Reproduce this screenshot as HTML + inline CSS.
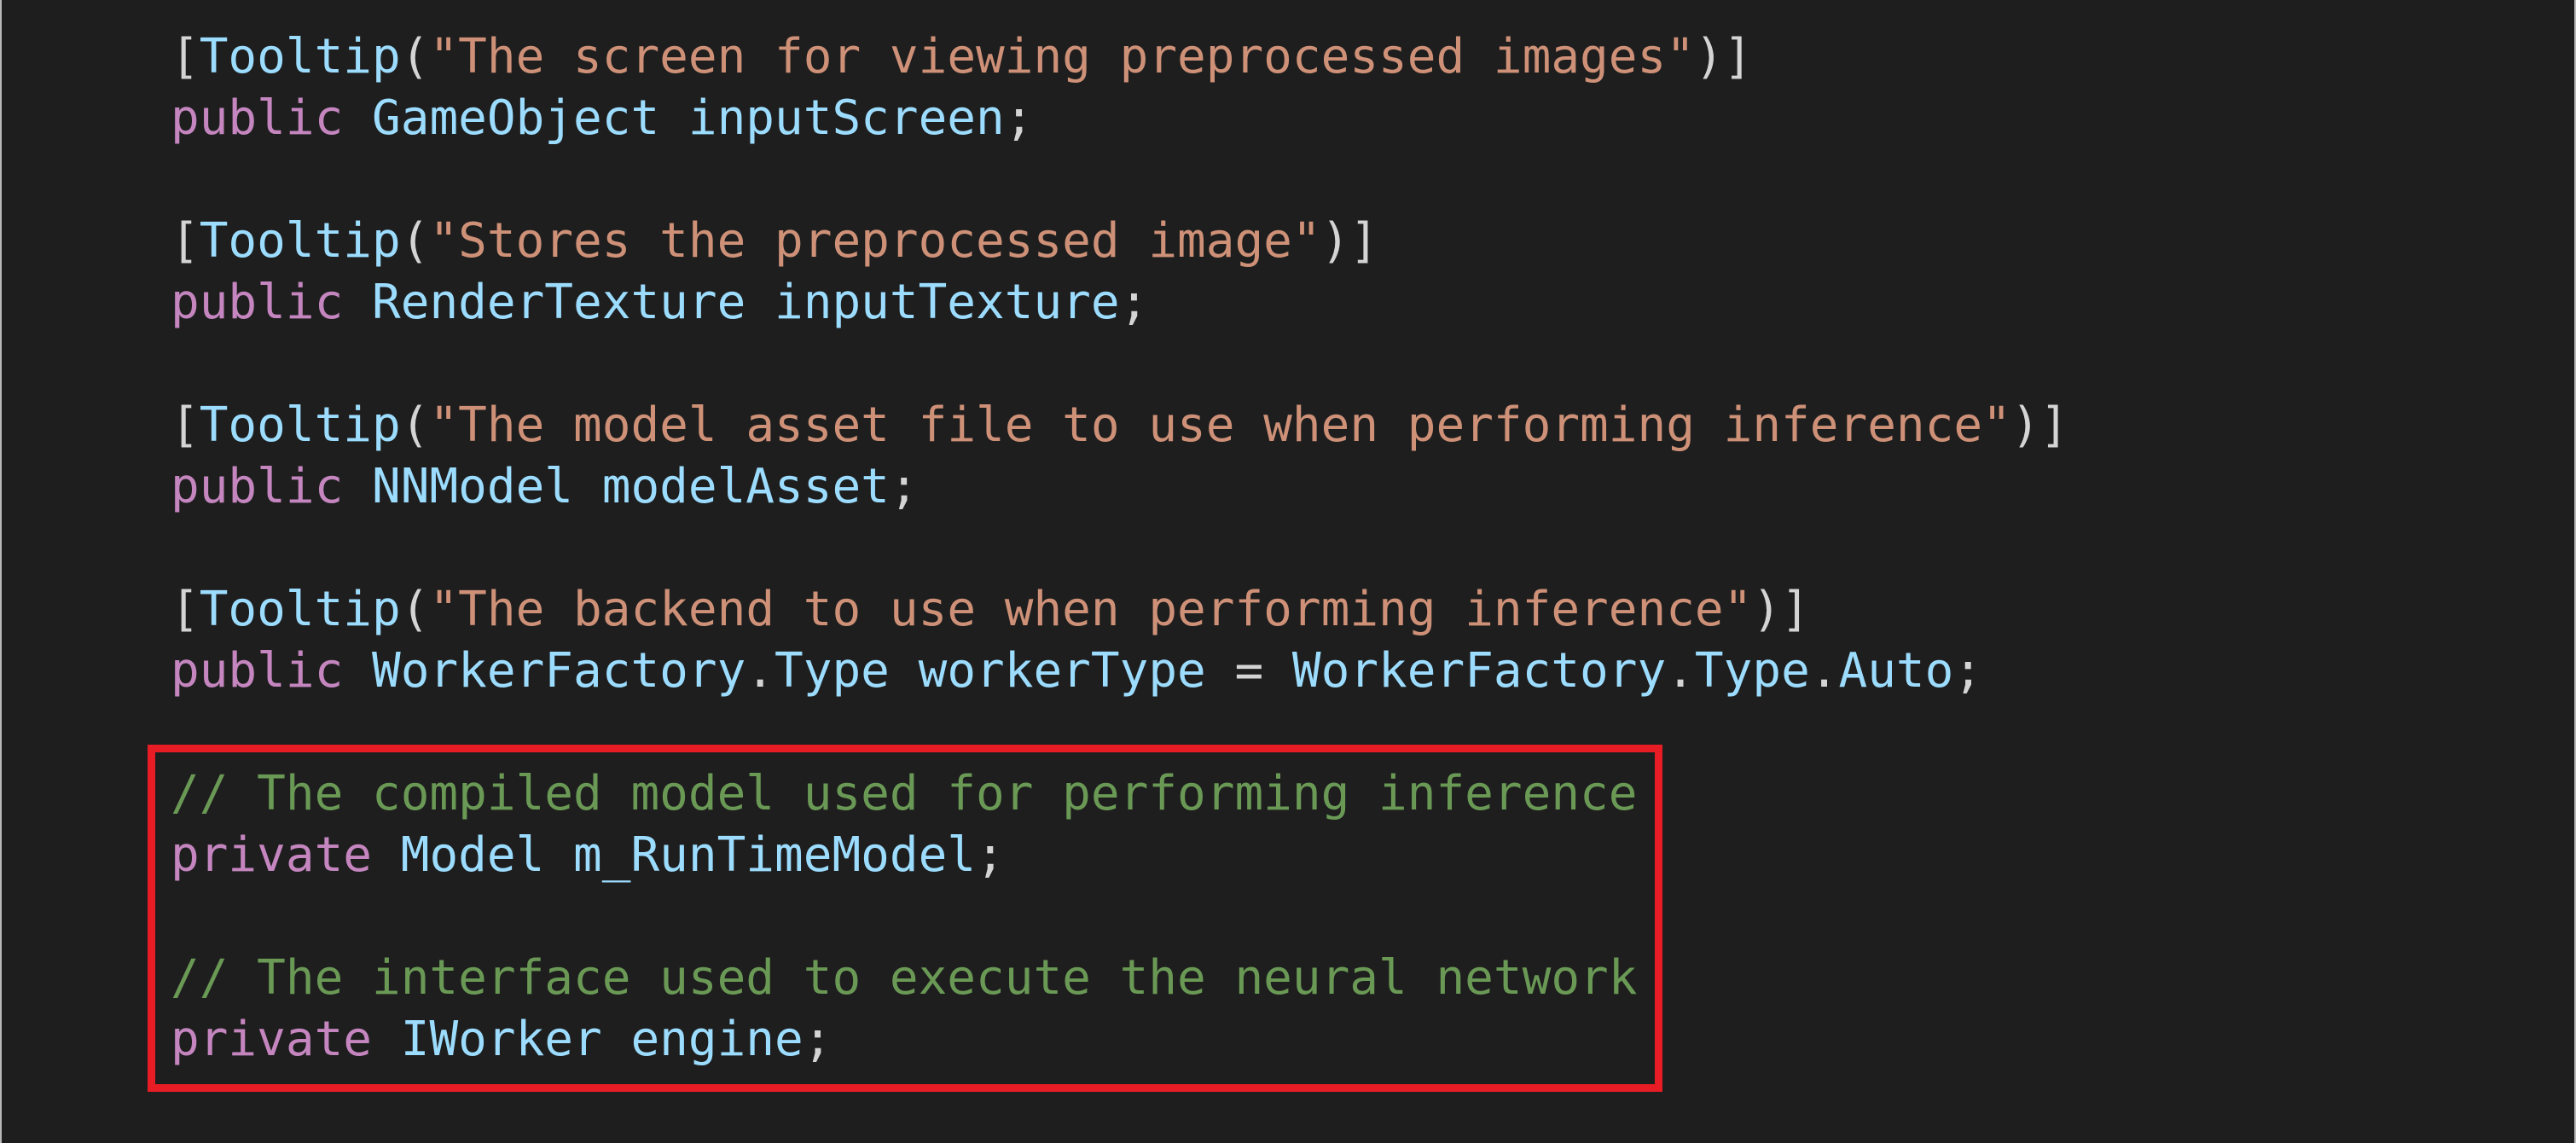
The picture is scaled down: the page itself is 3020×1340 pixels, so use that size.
<!DOCTYPE html>
<html><head><meta charset="utf-8"><style>
html,body{margin:0;padding:0}
body{width:3020px;height:1340px;background:#1e1e1e;position:relative;overflow:hidden;box-sizing:border-box;border-left:2px solid #b8b8b8;border-right:2px solid #b8b8b8}
pre{position:absolute;left:198px;top:31px;margin:0;font-family:"DejaVu Sans Mono","Liberation Mono",monospace;font-size:56px;line-height:72px;color:#9cdcfe;white-space:pre}
.k{color:#c586c0}.s{color:#ce9178}.p{color:#d4d4d4}.c{color:#6a9955}
.box{position:absolute;left:171px;top:873px;width:1776px;height:407px;box-sizing:border-box;border:9px solid #e81c25}
</style></head><body>
<pre><span class="p">[</span>Tooltip<span class="p">(</span><span class="s">"The screen for viewing preprocessed images"</span><span class="p">)]</span>
<span class="k">public</span> GameObject inputScreen<span class="p">;</span>

<span class="p">[</span>Tooltip<span class="p">(</span><span class="s">"Stores the preprocessed image"</span><span class="p">)]</span>
<span class="k">public</span> RenderTexture inputTexture<span class="p">;</span>

<span class="p">[</span>Tooltip<span class="p">(</span><span class="s">"The model asset file to use when performing inference"</span><span class="p">)]</span>
<span class="k">public</span> NNModel modelAsset<span class="p">;</span>

<span class="p">[</span>Tooltip<span class="p">(</span><span class="s">"The backend to use when performing inference"</span><span class="p">)]</span>
<span class="k">public</span> WorkerFactory<span class="p">.</span>Type workerType <span class="p">=</span> WorkerFactory<span class="p">.</span>Type<span class="p">.</span>Auto<span class="p">;</span>

<span class="c">// The compiled model used for performing inference</span>
<span class="k">private</span> Model m_RunTimeModel<span class="p">;</span>

<span class="c">// The interface used to execute the neural network</span>
<span class="k">private</span> IWorker engine<span class="p">;</span></pre>
<div class="box"></div>
</body></html>
